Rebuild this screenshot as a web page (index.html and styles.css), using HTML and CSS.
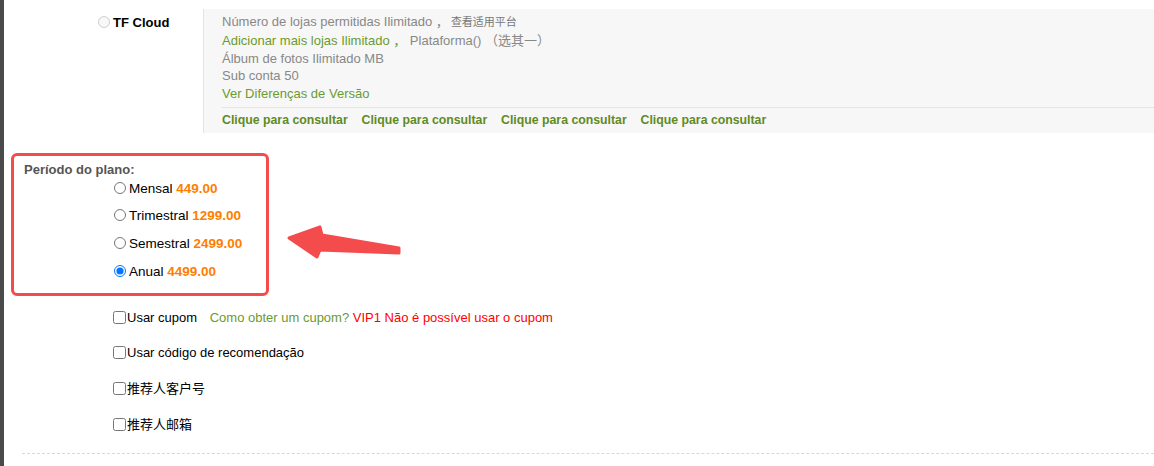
FILE: index.html
```html
<!DOCTYPE html>
<html lang="pt">
<head>
  <meta charset="UTF-8">
  <meta name="viewport" content="width=device-width, initial-scale=1.0">
  <title>Plano</title>
  <link rel="stylesheet" href="styles.css">
</head>
<body>
<div class="page">

  <!-- Plan row -->
  <div class="plan-row">
    <label class="plan-name"><input type="radio" name="plan" disabled>TF Cloud</label>
    <div class="plan-info">
      <div>Número de lojas permitidas Ilimitado ，<span class="small-cn">查看适用平台</span></div>
      <div class="green">Adicionar mais lojas Ilimitado ， <span class="gray">Plataforma() （选其一）</span></div>
      <div>Álbum de fotos Ilimitado MB</div>
      <div>Sub conta 50</div>
      <div class="green">Ver Diferenças de Versão</div>
      <div class="plan-links">
        <a href="#">Clique para consultar</a>
        <a href="#">Clique para consultar</a>
        <a href="#">Clique para consultar</a>
        <a href="#">Clique para consultar</a>
      </div>
    </div>
  </div>

  <!-- Period -->
  <div class="period">
    <div class="period-title">Período do plano:</div>
    <div class="period-options">
      <label><input type="radio" name="period">Mensal <b class="price">449.00</b></label>
      <label><input type="radio" name="period">Trimestral <b class="price">1299.00</b></label>
      <label><input type="radio" name="period">Semestral <b class="price">2499.00</b></label>
      <label><input type="radio" name="period" checked>Anual <b class="price">4499.00</b></label>
    </div>
    <div class="mark-box"></div>
    <svg class="mark-arrow" width="130" height="45" viewBox="0 0 130 45">
      <polygon points="9,18 40,7 42,15 119,28 119,33 40,30 37,37" fill="#f44c4c" stroke="#f44c4c" stroke-width="3" stroke-linejoin="round"/>
    </svg>
  </div>

  <!-- Extras -->
  <div class="extras">
    <label><input type="checkbox">Usar cupom <span class="coupon-help">Como obter um cupom?</span> <span class="coupon-warn">VIP1 Não é possível usar o cupom</span></label>
    <label><input type="checkbox">Usar código de recomendação</label>
    <label><input type="checkbox">推荐人客户号</label>
    <label><input type="checkbox">推荐人邮箱</label>
  </div>

  <div class="divider"></div>
</div>
</body>
</html>
```

FILE: styles.css
```css
html, body {
  margin: 0;
  padding: 0;
  background-color: white;
  font-family: "Liberation Sans", "Noto Sans CJK SC", sans-serif;
  font-size: 13px;
  color: #000;
}

.page {
  border-left: 4px solid #4a4a4a;
  min-height: 100vh;
  box-sizing: border-box;
  padding-top: 9px;
}

/* Plan row */
.plan-row {
  display: flex;
}

.plan-name {
  width: 105px;
  margin-left: 94px;
  padding-top: 5px;
  line-height: 18px;
  height: 18px;
  font-weight: bold;
}

.plan-name input {
  width: 12px;
  height: 12px;
  margin: 0 3px 0 0;
  vertical-align: -1px;
}

.plan-info {
  flex: 1;
  background-color: #f7f7f7;
  border-left: 1px solid #dcedc8;
  padding: 4px 0 0 18px;
  line-height: 17.75px;
  color: #888;
}

.plan-info .green {
  color: #6b9a30;
}

.plan-info .gray {
  color: #888;
}

.small-cn {
  font-size: 11px;
  color: #777;
  margin-left: 2px;
}

.plan-links {
  border-top: 1px solid #dcedc8;
  margin-top: 4px;
  padding: 4px 0 3px;
  display: flex;
}

.plan-links a {
  width: 139.5px;
  color: #5f8b1f;
  font-size: 12.3px;
  font-weight: bold;
  text-decoration: none;
}

/* Period */
.period {
  position: relative;
  margin-top: 20px;
  padding-top: 8px;
}

.period-title {
  padding-left: 20px;
  font-weight: bold;
  color: #555;
  line-height: 18px;
}

.period-options {
  padding-left: 110px;
  margin-top: 1px;
  display: flex;
  flex-direction: column;
  gap: 9.7px;
  font-size: 13.5px;
}

.period-options label,
.extras label {
  display: block;
  line-height: 18px;
}

.period-options input {
  width: 12px;
  height: 12px;
  margin: 0 3px 0 0;
  vertical-align: -1px;
}

.price {
  color: #ff7e00;
}

.mark-box {
  position: absolute;
  left: 7px;
  top: 0;
  width: 258px;
  height: 143px;
  box-sizing: border-box;
  border: 3px solid #f44c4c;
  border-radius: 6px;
}

.mark-arrow {
  position: absolute;
  left: 276px;
  top: 67px;
}

/* Extras */
.extras {
  margin-top: 28px;
  padding-left: 109px;
  display: flex;
  flex-direction: column;
  gap: 17.7px;
}

.extras input {
  width: 13px;
  height: 13px;
  margin: 0 1px 0 0;
  vertical-align: -2px;
}

.coupon-help {
  color: #6b9a30;
  margin-left: 9px;
}

.coupon-warn {
  color: #f00;
}

.divider {
  margin: 19px 0 0 18px;
  border-top: 1px dashed #d8d8d8;
}
```
